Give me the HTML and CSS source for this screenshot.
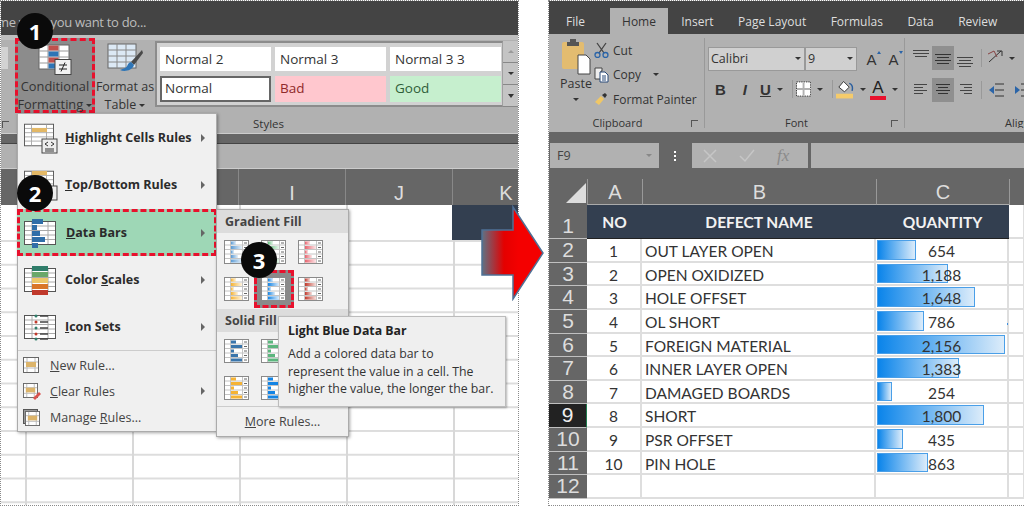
FILE: index.html
```html
<!DOCTYPE html>
<html lang="en">
<head>
    <meta charset="UTF-8">
    <meta name="viewport" content="width=device-width, initial-scale=1.0">
    <title>Conditional Formatting - Data Bars</title>
    <link rel="stylesheet" href="styles.css">
</head>
<body>
    <svg class="defs" width="0" height="0">
        <defs>
            <linearGradient id="fade"><stop offset="0" stop-color="#fff" stop-opacity="0"/><stop offset="1" stop-color="#fff" stop-opacity=".85"/></linearGradient>
            <linearGradient id="arrowFill"><stop offset="0" stop-color="#5f7284"/><stop offset=".36" stop-color="#e40000"/><stop offset=".6" stop-color="#f40000"/></linearGradient>
            <symbol id="thumb-bars" viewBox="0 0 25 24">
                <rect x=".5" y=".5" width="24" height="23" fill="#fff" stroke="#8a8a8a"/>
                <path d="M1 5h23M1 9.500h23M1 14h23M1 18.500h23M6.500 1v22M18.500 1v22" stroke="#c4c4c4" fill="none"/>
                <g fill="currentColor">
                    <rect x="7" y="1.500" width="5" height="3"/><rect x="7" y="6" width="11" height="3"/><rect x="7" y="10.500" width="3" height="3"/><rect x="7" y="15" width="7" height="3"/><rect x="7" y="19.500" width="11" height="3"/>
                </g>
                <path d="M20 3h3M20 7.500h3M20 12h3M20 16.500h3M20 21h3" stroke="#666"/>
            </symbol>
            <symbol id="thumb-grad" viewBox="0 0 25 24">
                <use href="#thumb-bars"/>
                <g fill="url(#fade)">
                    <rect x="7" y="1.500" width="5" height="3"/><rect x="7" y="6" width="11" height="3"/><rect x="7" y="10.500" width="3" height="3"/><rect x="7" y="15" width="7" height="3"/><rect x="7" y="19.500" width="11" height="3"/>
                </g>
            </symbol>
            <symbol id="sheet-icon" viewBox="0 0 32 24">
                <rect x=".5" y=".5" width="31" height="23" fill="#fff" stroke="#555"/>
                <path d="M1 5h30M1 9.500h30M1 14h30M1 18.500h30M8 1v22M24 1v22" stroke="#aaa" fill="none"/>
            </symbol>
            <symbol id="rule-icon" viewBox="0 0 16 16">
                <rect x=".5" y=".5" width="15" height="15" fill="#fff" stroke="#666"/>
                <path d="M1 5h14M1 11h14M4 1v14M12 1v14" stroke="#bbb" fill="none"/>
                <rect x="3" y="5" width="10" height="5" fill="#dcb46a"/>
            </symbol>
        </defs>
    </svg>

    <section class="pane pane-left">
        <div class="title-bar">Tell me what you want to do...</div>
        <div class="ribbon ribbon-left">
            <div class="stub"><span class="stub-box"></span><i class="launcher stub-launcher"></i></div>
            <div class="big-btn big-btn-active">
                <svg class="big-icon" width="34" height="32" viewBox="0 0 34 32">
                    <rect x="1" y="1" width="30" height="24" fill="#fff" stroke="#666"/>
                    <path d="M1 7h30M1 13h30M1 19h30M10 1v24M21 1v24" stroke="#999" fill="none"/>
                    <rect x="10.500" y="1.500" width="10" height="5" fill="#c0504d"/>
                    <rect x="10.500" y="7.500" width="10" height="5" fill="#2e75b6"/>
                    <rect x="10.500" y="13.500" width="10" height="5" fill="#c0504d"/>
                    <rect x="10.500" y="19.500" width="10" height="5" fill="#2e75b6"/>
                    <rect x="17" y="15.500" width="16" height="15" fill="#f2f2f2" stroke="#444"/>
                    <path d="M21 21h8M21 25h8M27 18.500l-4 9" stroke="#222" fill="none"/>
                </svg>
                <span>Conditional</span>
                <span>Formatting <i class="caret"></i></span>
            </div>
            <div class="big-btn big-btn-table">
                <svg class="big-icon" width="36" height="34" viewBox="0 0 36 34">
                    <rect x="1" y="2" width="28" height="24" fill="#dce9f5" stroke="#666"/>
                    <path d="M1 8h28M1 14h28M1 20h28M10 2v24M19 2v24" stroke="#888" fill="none"/>
                    <path d="M35 8 24 20l3 3L36 11z" fill="#4a4a4a"/>
                    <path d="M24 20c-4 1-3 5-6 6l-5 2c4 2 12 1 14-5z" fill="#2e75b6"/>
                </svg>
                <span>Format as</span>
                <span>Table <i class="caret"></i></span>
            </div>
            <div class="gallery">
                <div class="style-cell">Normal 2</div>
                <div class="style-cell">Normal 3</div>
                <div class="style-cell">Normal 3 3</div>
                <div class="style-cell style-current">Normal</div>
                <div class="style-cell style-bad">Bad</div>
                <div class="style-cell style-good">Good</div>
            </div>
            <div class="gallery-scroll">
                <span><i class="caret caret-up"></i></span>
                <span><i class="caret"></i></span>
                <span><i class="caret caret-more"></i></span>
            </div>
            <div class="ribbon-label">Styles</div>
        </div>
        <div class="band"></div>
        <div class="formula-left"></div>
        <div class="col-head">
            <span></span><span></span><span></span><span>I</span><span>J</span><span>K</span>
        </div>
        <div class="row-one gridlines"><div class="title-cell"></div></div>
        <div class="rows gridlines"></div>

        <div class="cf-menu">
            <div class="menu-item">
                <svg class="menu-icon" width="34" height="32" viewBox="0 0 34 32">
                    <use href="#sheet-icon" width="30" height="24" y="1"/>
                    <rect x="8" y="6" width="15" height="4" fill="#e3b866"/>
                    <rect x="18" y="17" width="15" height="14" fill="#eee" stroke="#444"/>
                    <path d="M24 20l-3 2 3 2M27 20l3 2-3 2M21 27h9M21 29h9" stroke="#333" fill="none"/>
                </svg>
                <span><u>H</u>ighlight Cells Rules</span><i class="arrow"></i>
            </div>
            <div class="menu-item">
                <svg class="menu-icon" width="34" height="32" viewBox="0 0 34 32">
                    <use href="#sheet-icon" width="30" height="24" y="1"/>
                    <rect x="8" y="2" width="15" height="4" fill="#e3b866"/>
                    <rect x="18" y="17" width="15" height="14" fill="#eee" stroke="#444"/>
                </svg>
                <span><u>T</u>op/Bottom Rules</span><i class="arrow"></i>
            </div>
            <div class="menu-item menu-item-active">
                <svg class="menu-icon" width="34" height="32" viewBox="0 0 34 32">
                    <use href="#sheet-icon" width="32" height="31" y=".5"/>
                    <g fill="#2f6ea8"><rect x="8" y="2" width="11" height="5"/><rect x="8" y="8" width="5" height="5"/><rect x="8" y="14" width="8" height="5"/><rect x="8" y="20" width="13" height="5"/><rect x="8" y="26" width="6" height="5"/></g>
                </svg>
                <span><u>D</u>ata Bars</span><i class="arrow"></i>
            </div>
            <div class="menu-item">
                <svg class="menu-icon" width="34" height="32" viewBox="0 0 34 32">
                    <use href="#sheet-icon" width="32" height="31" y=".5"/>
                    <rect x="8" y="2" width="16" height="5" fill="#2f7d6a"/><rect x="8" y="8" width="16" height="5" fill="#6aa86a"/><rect x="8" y="14" width="16" height="5" fill="#ecc76a"/><rect x="8" y="20" width="16" height="5" fill="#d9762a"/><rect x="8" y="26" width="16" height="5" fill="#c0392b"/>
                </svg>
                <span>Color <u>S</u>cales</span><i class="arrow"></i>
            </div>
            <div class="menu-item">
                <svg class="menu-icon" width="34" height="32" viewBox="0 0 34 32">
                    <use href="#sheet-icon" width="32" height="31" y=".5"/>
                    <circle cx="12" cy="5" r="1.500" fill="#2f7d6a"/><circle cx="12" cy="11" r="1.500" fill="#c0392b"/><circle cx="12" cy="17" r="1.500" fill="#2f7d6a"/><circle cx="12" cy="23" r="1.500" fill="#c0392b"/><circle cx="12" cy="28" r="1.500" fill="#2f7d6a"/>
                    <path d="M16 5h8M16 11h8M16 17h8M16 23h8M16 28h8" stroke="#444" stroke-width="1.500"/>
                </svg>
                <span><u>I</u>con Sets</span><i class="arrow"></i>
            </div>
            <div class="menu-sep"></div>
            <div class="menu-item menu-item-small">
                <svg class="small-icon" width="16" height="16"><use href="#rule-icon"/></svg>
                <span><u>N</u>ew Rule...</span>
            </div>
            <div class="menu-item menu-item-small">
                <svg class="small-icon" width="18" height="18" viewBox="0 0 18 18">
                    <use href="#rule-icon" width="15" height="15"/>
                    <path d="M10 15l6-6 2 2-6 6z" fill="#d9534f"/>
                </svg>
                <span><u>C</u>lear Rules</span><i class="arrow"></i>
            </div>
            <div class="menu-item menu-item-small">
                <svg class="small-icon" width="18" height="18" viewBox="0 0 18 18">
                    <rect x=".5" y=".5" width="14" height="14" fill="#999" stroke="#555"/>
                    <use href="#rule-icon" x="2" y="2" width="15" height="15"/>
                </svg>
                <span>Manage <u>R</u>ules...</span>
            </div>
        </div>

        <div class="sub-menu">
            <div class="sub-head">Gradient Fill</div>
            <div class="thumb-grid">
                <svg class="thumb blue"><use href="#thumb-grad"/></svg>
                <svg class="thumb green"><use href="#thumb-grad"/></svg>
                <svg class="thumb red"><use href="#thumb-grad"/></svg>
                <svg class="thumb orange"><use href="#thumb-grad"/></svg>
                <span class="thumb-picked"><svg class="thumb sky"><use href="#thumb-grad"/></svg></span>
                <svg class="thumb darkred"><use href="#thumb-grad"/></svg>
            </div>
            <div class="sub-head">Solid Fill</div>
            <div class="thumb-grid thumb-grid-solid">
                <svg class="thumb steel"><use href="#thumb-bars"/></svg>
                <svg class="thumb leaf"><use href="#thumb-bars"/></svg>
                <svg class="thumb red"><use href="#thumb-bars"/></svg>
                <svg class="thumb orange-solid"><use href="#thumb-bars"/></svg>
                <svg class="thumb sky"><use href="#thumb-bars"/></svg>
                <svg class="thumb darkred"><use href="#thumb-bars"/></svg>
            </div>
            <div class="sub-more"><u>M</u>ore Rules...</div>
        </div>

        <div class="tooltip">
            <b>Light Blue Data Bar</b>
            <p>Add a colored data bar to<br>represent the value in a cell. The<br>higher the value, the longer the bar.</p>
        </div>

        <div class="badge badge-1">1</div>
        <div class="badge badge-2">2</div>
        <div class="badge badge-3">3</div>
    </section>

    <svg class="big-arrow" width="64" height="96" viewBox="0 0 64 96">
        <path d="M1 25h31V2l30 46-30 46V70H1z" fill="url(#arrowFill)" stroke="#4f7095" stroke-width="1.500"/>
    </svg>

    <section class="pane pane-right">
        <div class="tabs">
            <span class="tab tab-file">File</span>
            <span class="tab tab-home">Home</span>
            <span class="tab">Insert</span>
            <span class="tab">Page Layout</span>
            <span class="tab">Formulas</span>
            <span class="tab">Data</span>
            <span class="tab">Review</span>
        </div>
        <div class="ribbon ribbon-right">
            <div class="group group-clip">
                <div class="group-body clip-body">
                    <div class="paste">
                        <svg width="30" height="38" viewBox="0 0 30 38">
                            <rect x="1" y="4" width="22" height="27" rx="2" fill="#e3bc70"/>
                            <path d="M6 8V4h3V1h6v3h3v4z" fill="#555"/>
                            <path d="M17 17h8l4 4v15H17z" fill="#fff" stroke="#444"/>
                        </svg>
                        <span>Paste</span>
                        <i class="caret"></i>
                    </div>
                    <div class="clip-list">
                        <div class="clip-row">
                            <svg width="15" height="16" viewBox="0 0 15 16"><path d="M3 1l7 10M12 1 5 11" stroke="#444" stroke-width="1.300" fill="none"/><circle cx="3.500" cy="13" r="2.500" fill="none" stroke="#2a64a8" stroke-width="1.300"/><circle cx="11.500" cy="13" r="2.500" fill="none" stroke="#2a64a8" stroke-width="1.300"/></svg>
                            <span>Cut</span>
                        </div>
                        <div class="clip-row">
                            <svg width="15" height="16" viewBox="0 0 15 16"><path d="M1 1h7v3h-1v8H1z" fill="#eee" stroke="#444"/><path d="M6 5h5l3 3v7H6z" fill="#fff" stroke="#2a4a78"/><path d="M8 9h4M8 11h4M8 13h4" stroke="#2a4a78"/></svg>
                            <span>Copy</span><i class="caret caret-copy"></i>
                        </div>
                        <div class="clip-row">
                            <svg width="15" height="14" viewBox="0 0 15 14"><path d="M1 10 7 4l3 3-5 6z" fill="#f0c766"/><path d="M8 3l3-2 2 2-2 3z" fill="#333"/></svg>
                            <span>Format Painter</span>
                        </div>
                    </div>
                </div>
                <div class="group-label">Clipboard<i class="launcher"></i></div>
            </div>
            <div class="group group-font">
                <div class="group-body font-body">
                    <div class="font-row">
                        <div class="select select-name">Calibri<i class="caret"></i></div>
                        <div class="select select-size">9<i class="caret"></i></div>
                        <span class="font-grow">A<i class="tip tip-up"></i></span>
                        <span class="font-grow">A<i class="tip tip-down"></i></span>
                    </div>
                    <div class="font-row font-row-tools">
                        <b class="tool tool-b">B</b>
                        <b class="tool tool-i">I</b>
                        <b class="tool tool-u">U</b>
                        <i class="caret"></i>
                        <span class="tool-sep"></span>
                        <svg width="16" height="16" viewBox="0 0 16 16"><rect x=".5" y=".5" width="15" height="15" fill="#fff" stroke="#333" stroke-dasharray="1.500 1"/><path d="M8 1v14M1 8h14" stroke="#b1b1b1" stroke-width="2"/></svg>
                        <i class="caret"></i>
                        <span class="tool-sep"></span>
                        <svg width="19" height="20" viewBox="0 0 19 20"><path d="M8 2l6 6-5 5-6-5z" fill="#fff" stroke="#333"/><path d="M14 4c3 1 4 4 3 8" stroke="#2a5e9e" stroke-width="1.500" fill="none"/><rect y="15" width="18" height="5" fill="#f5cb6b"/></svg>
                        <i class="caret"></i>
                        <span class="font-color">A</span>
                        <i class="caret"></i>
                    </div>
                </div>
                <div class="group-label">Font<i class="launcher"></i></div>
            </div>
            <div class="group group-align">
                <div class="align-body">
                    <div class="align-cell"><svg width="16" height="24" viewBox="0 0 16 24"><path d="M0 4.500h16M0 7.500h16M2 10.500h12" stroke="#444"/></svg></div>
                    <div class="align-cell align-on"><svg width="16" height="24" viewBox="0 0 16 24"><path d="M0 8.500h16M2 11.500h12M0 14.500h16M2 17.500h12" stroke="#333"/></svg></div>
                    <div class="align-cell"><svg width="16" height="24" viewBox="0 0 16 24"><path d="M0 11.500h16M2 14.500h12M0 17.500h16M2 20.500h12" stroke="#444"/></svg></div>
                    <span class="tool-sep"></span>
                    <svg class="orient" width="18" height="20" viewBox="0 0 18 20"><path d="M2 14 14 3M10 3h5v5" stroke="#333" fill="none"/><path d="M1 6l6-3 3 6" stroke="#844" fill="none"/></svg>
                    <i class="caret"></i>
                    <div class="align-cell"><svg width="16" height="24" viewBox="0 0 16 24"><path d="M1 6.500h13M1 9.500h9M1 12.500h13M1 15.500h9" stroke="#444"/></svg></div>
                    <div class="align-cell align-on"><svg width="16" height="24" viewBox="0 0 16 24"><path d="M1 6.500h14M3 9.500h10M1 12.500h14M3 15.500h10" stroke="#333"/></svg></div>
                    <div class="align-cell"><svg width="16" height="24" viewBox="0 0 16 24"><path d="M3 6.500h12M7 9.500h8M3 12.500h12M7 15.500h8" stroke="#444"/></svg></div>
                    <span class="tool-sep"></span>
                    <svg class="orient" width="16" height="20" viewBox="0 0 16 20"><path d="M1 10l5-4v8z" fill="#2a64a8"/><path d="M7 10h9M7 4h9M7 16h9" stroke="#333"/></svg>
                    <svg class="indent" width="16" height="20" viewBox="0 0 16 20"><path d="M6 10 1 6v8z" fill="#2a64a8"/><path d="M7 10h9M7 4h9M7 16h9" stroke="#333"/></svg>
                </div>
                <div class="group-label group-label-clip">Alignment</div>
            </div>
        </div>
        <div class="formula-right">
            <div class="name-box">F9<i class="caret"></i></div>
            <div class="grip"></div>
            <div class="formula-btns">
                <svg width="14" height="14" viewBox="0 0 14 14"><path d="M1 1l12 12M13 1 1 13" stroke="#c6c6c6" stroke-width="1.500"/></svg>
                <svg width="16" height="14" viewBox="0 0 16 14"><path d="M1 7l5 5 9-11" stroke="#c6c6c6" stroke-width="1.500" fill="none"/></svg>
                <span class="fx">fx</span>
            </div>
            <div class="formula-input"></div>
        </div>
        <div class="sheet">
            <div class="corner"></div><div class="col">A</div><div class="col">B</div><div class="col">C</div><div class="col col-rest"></div>

            <div class="rowno rowno-one">1</div><div class="th">NO</div><div class="th">DEFECT NAME</div><div class="th">QUANTITY</div><div class="td"></div>

            <div class="rowno">2</div><div class="td center">1</div><div class="td">OUT LAYER OPEN</div><div class="td qty"><span class="bar" style="width:29.6%"></span><span class="qty-val">654</span></div><div class="td"></div>
            <div class="rowno">3</div><div class="td center">2</div><div class="td">OPEN OXIDIZED</div><div class="td qty"><span class="bar" style="width:54%"></span><span class="qty-val">1,188</span></div><div class="td"></div>
            <div class="rowno">4</div><div class="td center">3</div><div class="td">HOLE OFFSET</div><div class="td qty"><span class="bar" style="width:74.7%"></span><span class="qty-val">1,648</span></div><div class="td"></div>
            <div class="rowno">5</div><div class="td center">4</div><div class="td">OL SHORT</div><div class="td qty"><span class="bar" style="width:35.6%"></span><span class="qty-val">786</span><i class="speck"></i></div><div class="td"></div>
            <div class="rowno">6</div><div class="td center">5</div><div class="td">FOREIGN MATERIAL</div><div class="td qty"><span class="bar" style="width:97.7%"></span><span class="qty-val">2,156</span></div><div class="td"></div>
            <div class="rowno">7</div><div class="td center">6</div><div class="td">INNER LAYER OPEN</div><div class="td qty"><span class="bar" style="width:62.7%"></span><span class="qty-val">1,383</span></div><div class="td"></div>
            <div class="rowno">8</div><div class="td center">7</div><div class="td">DAMAGED BOARDS</div><div class="td qty"><span class="bar" style="width:11.5%"></span><span class="qty-val">254</span></div><div class="td"></div>
            <div class="rowno rowno-on">9</div><div class="td center">8</div><div class="td">SHORT</div><div class="td qty"><span class="bar" style="width:81.6%"></span><span class="qty-val">1,800</span></div><div class="td"></div>
            <div class="rowno">10</div><div class="td center">9</div><div class="td">PSR OFFSET</div><div class="td qty"><span class="bar" style="width:19.7%"></span><span class="qty-val">435</span></div><div class="td"></div>
            <div class="rowno">11</div><div class="td center">10</div><div class="td">PIN HOLE</div><div class="td qty"><span class="bar" style="width:39.1%"></span><span class="qty-val">863</span></div><div class="td"></div>
            <div class="rowno">12</div><div class="td"></div><div class="td"></div><div class="td"></div><div class="td"></div>
        </div>
    </section>
</body>
</html>
```

FILE: styles.css
```css
* { box-sizing: border-box; }
html, body { margin: 0; padding: 0; }
body { width: 1024px; height: 506px; overflow: hidden; background: #fff; position: relative; display: flex; gap: 29px; font-family: "Open Sans", sans-serif; color: #333; }
.defs { position: absolute; }
i { font-style: normal; }

.pane { height: 506px; border: 1px dotted #8a8a8a; position: relative; overflow: hidden; flex: none; }
.pane-left { width: 519px; }
.pane-right { width: 476px; border-right: 0; }

/* shared bits */
.caret { display: inline-block; width: 0; height: 0; border: 3px solid transparent; border-top: 3px solid #333; border-bottom: 0; vertical-align: middle; }
.ribbon { background: #b1b1b1; position: relative; }
.band { height: 11px; background: #666; border-top: 1px solid #ccc; border-bottom: 1px solid #444; }
.launcher { position: absolute; right: 6px; top: 5px; width: 7px; height: 7px; border-left: 1px solid #555; border-top: 1px solid #555; }

/* left screenshot */
.title-bar { height: 34px; background: #444; color: #bdbdbd; font-size: 13px; letter-spacing: -.3px; line-height: 43px; white-space: nowrap; text-indent: -27px; }
.ribbon-left { height: 98px; display: flex; align-items: flex-start; border-top: 5px solid #bfbfbf; }
.stub { width: 14px; height: 100%; position: relative; }
.stub-box { display: block; width: 7px; height: 22px; margin-top: 7px; background: #d2d2d2; }
.stub-launcher { right: 6px; top: 81px; }
.big-btn { display: flex; flex-direction: column; align-items: center; font-size: 12.800px; line-height: 17.500px; color: #333; white-space: nowrap; }
.big-btn-active { width: 80px; height: 75px; margin-top: -2px; background: #8c8c8c; border: 3px dashed #e8112d; }
.big-btn-table { width: 60px; height: 70px; font-size: 12.500px; }
.big-icon { margin: 2px 0 2px; flex: none; }
.big-btn-active .big-icon { margin: 3px 0 2px; }
.gallery { width: 348px; height: 66px; margin-top: 1px; padding: 4px 3px 3px; background: #d2d2d2; border: 2px solid #8c8c8c; border-right: 1px solid #a0a0a0; display: grid; grid-template-columns: repeat(3, 111px); grid-template-rows: 24px 26px; gap: 5px 4px; }
.style-cell { background: #fff; font-size: 13.500px; line-height: 24px; padding-left: 5px; color: #333; }
.style-current { border: 2px solid #666; padding-left: 3px; line-height: 20px; }
.style-bad { background: #ffc7ce; color: #8f2a2a; line-height: 25px; }
.style-good { background: #c6efce; color: #2e5e38; line-height: 25px; }
.gallery-scroll { width: 15px; margin-top: 1px; height: 66px; display: flex; flex-direction: column; background: #c4c4c4; }
.gallery-scroll span { flex: 1; display: flex; align-items: center; justify-content: center; border-bottom: 1px solid #888; }
.caret-up { border-top: 0; border-bottom: 3px solid #999; }
.caret-more { border-top-width: 4px; box-shadow: 0 -3px 0 -2px #333; }
.ribbon-label { position: absolute; left: 252px; top: 76px; font-size: 11.500px; line-height: 16px; }
.formula-left { height: 25px; background: #b1b1b1; border-bottom: 1px solid #ccc; }
.col-head { height: 36px; overflow: hidden; background: #666; display: grid; grid-template-columns: 24px repeat(5, 107px); color: #ddd; font-family: "Liberation Sans", sans-serif; font-size: 20px; line-height: 49px; text-align: center; }
.col-head span { border-right: 1px solid #888; }
.gridlines { background-image: linear-gradient(90deg, #d8d8d8 2px, transparent 2px); background-size: 107px 100%; background-position: 24px 0; }
.row-one { height: 35px; display: flex; justify-content: flex-end; }
.title-cell { width: 66px; background: #333f50; }
.rows { height: 270px; background-image: linear-gradient(90deg, #d8d8d8 2px, transparent 2px), linear-gradient(#ddd 2px, transparent 2px); background-size: 107px 100%, 100% 23.750px; background-position: 24px 0, 0 0; }

.cf-menu { position: absolute; left: 16px; top: 112px; width: 200px; height: 319px; background: #f0f0f0; border: 1px solid #ababab; box-shadow: 1px 1px 3px rgba(0,0,0,0.35); font-size: 12.500px; }
.menu-item { height: 47px; display: flex; align-items: center; position: relative; padding-left: 47px; font-weight: 700; color: #2b2b2b; white-space: nowrap; }
.menu-icon { position: absolute; left: 6px; top: 8px; }
.menu-item-active { background: #9ed7b6; border: 3px dashed #e8112d; margin: 1px -1px 0; padding-left: 46px; }
.menu-item-active .menu-icon { left: 4px; top: 5px; }
.arrow { position: absolute; left: 183px; top: 50%; margin-top: -4px; width: 0; height: 0; border: 4px solid transparent; border-left: 4px solid #666; border-right: 0; }
.menu-item-active .arrow { left: 181px; }
.menu-sep { height: 1px; background: #ccc; margin: 0 0 1px; }
.menu-item-small { height: 26px; padding-left: 32px; font-weight: 400; color: #444; }
.small-icon { position: absolute; left: 5px; top: 5px; }
.sub-menu { position: absolute; left: 215px; top: 208px; width: 133px; height: 228px; background: #f0f0f0; border: 1px solid #ababab; box-shadow: 1px 1px 3px rgba(0,0,0,0.35); }
.sub-head { height: 23px; background: #dcdcdc; font-size: 12.500px; font-weight: 700; line-height: 24px; padding-left: 8px; color: #444; }
.thumb-grid { display: grid; grid-template-columns: repeat(3, 25px); grid-auto-rows: 24px; gap: 13px 12px; padding: 7px 0 0 7px; height: 76px; align-items: center; justify-items: center; }
.thumb-grid-solid { height: 74px; }
.thumb { display: block; width: 25px; height: 24px; }
.thumb use { width: 25px; height: 24px; }
.blue { color: #5b9bd5; }
.green { color: #63be7b; }
.red { color: #e8626d; }
.orange { color: #f5b335; }
.sky { color: #1484e4; }
.darkred { color: #c0392b; }
.steel { color: #3a75ab; }
.leaf { color: #5cb67e; }
.orange-solid { color: #f5b335; }
.thumb-picked { display: block; width: 40px; height: 38px; padding: 7px; margin: -7px; background: #8a8a8a; border: 3px dashed #e8112d; position: relative; }
.thumb-picked .thumb { position: absolute; left: 4px; top: 4px; }
.sub-more { border-top: 1px solid #ccc; height: 30px; font-size: 12.500px; line-height: 30px; text-align: center; color: #444; }
.tooltip { position: absolute; left: 277px; top: 315px; width: 228px; height: 91px; padding: 6px 4px 6px 9px; background: #efefef; border: 1px solid #bcbcbc; box-shadow: 1px 1px 2px rgba(0,0,0,0.3); font-size: 12.300px; line-height: 17.500px; color: #333; white-space: nowrap; }
.tooltip b { display: block; color: #222; margin-bottom: 6px; line-height: 16px; }
.tooltip p { margin: 0; }
.badge { position: absolute; width: 36px; height: 36px; border-radius: 50%; background: #0a0a0a; color: #fff; font-size: 22px; font-weight: 700; line-height: 36px; text-align: center; }
.badge-1 { left: 16px; top: 12px; }
.badge-2 { left: 16px; top: 174px; }
.badge-3 { left: 240px; top: 241px; }

.big-arrow { position: absolute; left: 481px; top: 205px; }

/* right screenshot */
.tabs { height: 33px; background: #444; display: flex; align-items: flex-end; color: #dedede; font-size: 12px; line-height: 28px; padding-left: 12px; white-space: nowrap; }
.tab { padding: 0 12.250px; height: 26px; }
.tab-file { padding: 0 25px 0 5px; }
.tab-home { background: #b1b1b1; color: #333; padding: 0; width: 58px; text-align: center; margin-right: 1px; }
.ribbon-right { height: 98px; display: flex; }
.group { position: relative; display: flex; flex-direction: column; border-right: 1px solid #999; margin: 4px 0; height: 90px; }
.group-clip { width: 156px; }
.group-font { width: 200px; }
.group-align { flex: 1; border-right: 0; overflow: hidden; }
.group-body { height: 77px; flex: none; }
.group-label { height: 13px; flex: none; font-size: 11px; line-height: 16px; text-align: center; position: relative; padding-right: 18px; }
.group-font .group-label { padding-right: 16px; }
.group-label-clip { text-align: left; padding-left: 100px; white-space: nowrap; }
.clip-body { display: flex; padding: 0 0 0 8px; }
.paste { width: 38px; display: flex; flex-direction: column; align-items: center; font-size: 12.500px; line-height: 18px; }
.paste svg { margin-bottom: -1px; flex: none; }
.paste .caret { margin-top: 5px; }
.clip-list { margin-left: -1px; }
.clip-row { display: flex; align-items: center; gap: 4px; height: 24.500px; font-size: 12px; white-space: nowrap; }
.clip-row svg { flex: none; }
.caret-copy { margin-left: 8px; }
.font-body { padding: 9px 0 0 3px; }
.font-row { display: flex; align-items: center; }
.select { height: 24px; background: #d0d0d0; border: 1px solid #999; font-size: 12.500px; line-height: 22px; padding-left: 2px; position: relative; }
.select .caret { position: absolute; right: 3px; top: 9px; }
.select-name { width: 97px; }
.select-size { width: 52px; margin-left: 0; }
.font-grow { font-size: 15px; width: 21px; text-align: center; position: relative; font-family: "Liberation Sans", sans-serif; margin-left: 1px; }
.font-grow:first-of-type { margin-left: 4px; }
.tip { position: absolute; right: 1px; top: 0; width: 0; height: 0; border: 2px solid transparent; }
.tip-up { border-bottom: 3px solid #2a64a8; border-top: 0; }
.tip-down { border-top: 3px solid #2a64a8; border-bottom: 0; }
.font-row-tools { margin-top: 6px; height: 24px; }
.tool { font-size: 15px; color: #333; font-family: "Liberation Sans", sans-serif; }
.tool-b { margin-left: 7px; }
.tool-i { margin-left: 17px; font-style: italic; }
.tool-u { margin-left: 13px; text-decoration: underline; }
.font-row-tools .caret { margin: 0 6px 0 6px; }
.tool-sep { width: 1px; height: 18px; background: #999; margin: 0 3px 0 3px; flex: none; }
.font-color { font-size: 17px; line-height: 17px; width: 17px; margin-left: -2px; text-align: center; border-bottom: 4px solid #e8112d; color: #222; font-family: "Liberation Sans", sans-serif; }
.align-body { height: 77px; display: grid; grid-template-columns: 22px 22px 22px 10px 20px 12px; grid-auto-rows: 24px; row-gap: 8px; padding: 8px 0 0 5px; width: 130px; align-items: center; justify-items: center; }
.align-cell { width: 22px; height: 24px; display: flex; justify-content: center; }
.align-on { background: #8f8f8f; }
.indent { margin-left: 20px; }
.formula-right { height: 47px; background: #666; display: flex; padding-top: 11px; border: 0; }
.name-box, .formula-btns, .formula-input { height: 25px; background: #b1b1b1; }
.name-box { width: 109px; margin-left: 1px; position: relative; color: #444; font-size: 12.500px; line-height: 25px; padding-left: 7px; }
.name-box .caret { position: absolute; right: 7px; top: 11px; border-top-color: #888; }
.grip { width: 32px; height: 12px; background: radial-gradient(circle, #fff 1.500px, transparent 1.500px) center 0 / 4px 4px repeat-y; margin: 7px 1px 0 0; }
.formula-btns { width: 116px; display: flex; align-items: center; gap: 22px; padding-left: 11px; }
.fx { color: #8a8a8a; font-family: "Liberation Serif", serif; font-style: italic; font-size: 17px; }
.formula-input { flex: 1; margin-left: 3px; }
.sheet { display: grid; grid-template-columns: 38px 55px 234px 133px 16px; grid-template-rows: 26px 34px; grid-auto-rows: 23.640px; font-family: Lato, sans-serif; font-size: 15.500px; }
.corner, .col { background: #666; }
.corner { position: relative; }
.corner::after { content: ""; position: absolute; right: 1px; top: 4px; border-style: solid; border-width: 0 0 20px 20px; border-color: transparent transparent #ddd transparent; }
.col { color: #ddd; font-family: "Liberation Sans", sans-serif; font-size: 20px; line-height: 26px; text-align: center; border-left: 1px solid #999; border-bottom: 1px solid #aaa; }
.col-rest { border-bottom: 0; }
.rowno { background: #666; color: #ddd; font-family: "Liberation Sans", sans-serif; font-size: 21px; line-height: 22px; text-align: center; border-bottom: 1px solid #c0c0c0; }
.rowno-one { line-height: 42px; }
.rowno-on { background: #222; color: #eee; border-right: 1px solid #1f7a4d; }
.th { background: #333f50; color: #f2f2f2; font-weight: 700; text-align: center; line-height: 35px; border-bottom: 1px solid #222; }
.td { border-bottom: 2px solid #dedede; border-right: 2px solid #dedede; padding-left: 3px; line-height: 25px; color: #333; white-space: nowrap; position: relative; }
.center { text-align: center; padding-left: 0; }
.qty { text-align: center; padding: 0; }
.bar { position: absolute; left: 1px; top: 1px; bottom: 1px; background: linear-gradient(90deg, #0a84ea, #dcecfa); border: 1px solid #4a9fe8; }
.qty-val { position: relative; }
.speck { position: absolute; right: -1px; top: 13px; width: 1px; height: 2px; background: #3d8fe0; }
```
